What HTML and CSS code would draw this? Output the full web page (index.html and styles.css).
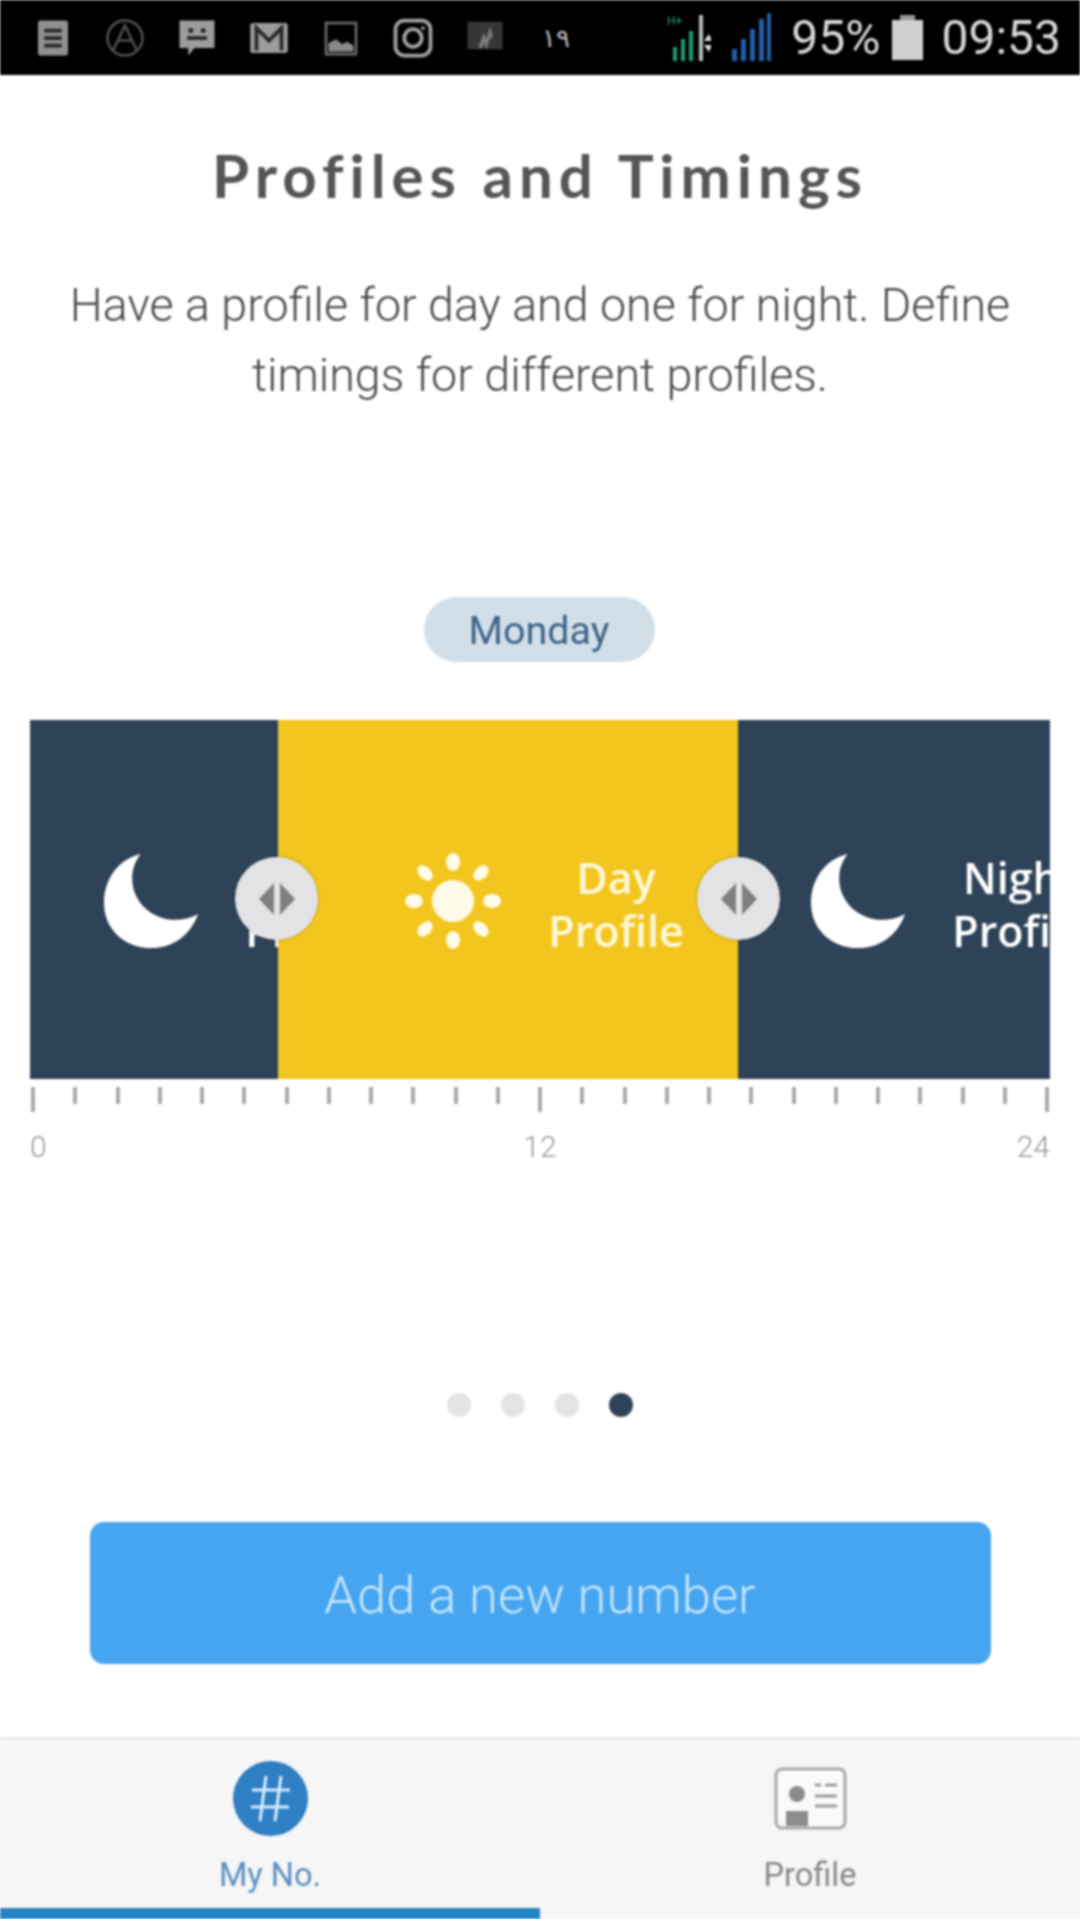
FILE: index.html
```html
<!DOCTYPE html>
<html lang="en">
<head>
  <meta charset="UTF-8">
  <meta name="viewport" content="width=device-width, initial-scale=1">
  <title>Profiles and Timings</title>
  <link rel="stylesheet" href="styles.css">
</head>
<body>
  <svg class="defs" width="0" height="0">
    <symbol id="moon" viewBox="0 0 100 100">
      <path d="M39 0C14 6 0 28 0 52C0 80 22 100 50 100C74 100 92 86 100 64C92 68 84 70 76 70C50 70 30 50 30 26C30 16 33 8 39 0Z" fill="#fff"/>
    </symbol>
  </svg>

  <div class="page">
    <div class="status-bar">
      <div class="status-icons">
        <svg class="status-icon" viewBox="0 0 32 32"><rect x="4" y="2" width="24" height="28" rx="2" fill="#b5b5b5"/><path d="M9 10h14M9 16h14M9 22h14" stroke="#333" stroke-width="3"/></svg>
        <svg class="status-icon" viewBox="0 0 32 32"><circle cx="16" cy="16" r="14" fill="none" stroke="#666" stroke-width="2"/><path d="M7 25L16 6l9 19M11 18h10" fill="none" stroke="#666" stroke-width="2"/></svg>
        <svg class="status-icon" viewBox="0 0 32 32"><path d="M2 2h28v22H14l-5 6v-6H2z" fill="#c4c4c4"/><circle cx="11" cy="10" r="2" fill="#333"/><circle cx="21" cy="10" r="2" fill="#333"/><path d="M8 16h16" stroke="#333" stroke-width="3"/></svg>
        <svg class="status-icon" viewBox="0 0 32 32"><rect x="1" y="4" width="30" height="24" rx="2" fill="#c4c4c4"/><path d="M6 26V8l10 10L26 8v18" fill="none" stroke="#333" stroke-width="3"/></svg>
        <svg class="status-icon" viewBox="0 0 32 32"><rect x="4" y="4" width="24" height="25" fill="none" stroke="#8a8a8a" stroke-width="2"/><path d="M6 27v-7l6-3 5 4 4-2 5 3v5z" fill="#aaa"/></svg>
        <svg class="status-icon" viewBox="0 0 32 32"><rect x="2" y="2" width="28" height="28" rx="7" fill="none" stroke="#c8c8c8" stroke-width="3"/><circle cx="16" cy="16" r="7" fill="none" stroke="#c8c8c8" stroke-width="3"/><circle cx="24" cy="8" r="1.5" fill="#c8c8c8"/></svg>
        <svg class="status-icon" viewBox="0 0 32 32"><rect x="2" y="3" width="28" height="22" fill="#444"/><path d="M12 24l3-8 2 5 3-9 1 4" fill="none" stroke="#999" stroke-width="3"/></svg>
        <span class="status-digits">١٩</span>
      </div>
      <div class="status-right">
        <svg class="signal" viewBox="0 0 44 54">
          <text x="0" y="14" class="signal-text">H+</text>
          <path d="M6 50h4V36H6zM14 50h4V28h-4zM22 50h4V20h-4z" fill="#1e9b6c"/>
          <path d="M32 50h4V4h-4z" fill="#bbb"/>
          <path d="M37 30l5-7 3 7zM37 34l5 7 3-7z" fill="#ddd"/>
        </svg>
        <svg class="signal signal-blue" viewBox="0 0 40 54">
          <path d="M1 50h5V38H1zM10 50h5V28h-5zM19 50h5V18h-5zM28 50h5V8h-5z" fill="#1f5fa8"/>
          <path d="M36 50h4V2h-4z" fill="#1f5fa8"/>
        </svg>
        <span class="status-text">95%</span>
        <span class="battery"></span>
        <span class="status-text">09:53</span>
      </div>
    </div>

    <div class="content">
      <h1 class="title">Profiles and Timings</h1>
      <p class="desc">Have a profile for day and one for night. Define<br>timings for different profiles.</p>

      <div class="day-pill">Monday</div>

      <div class="chart">
        <div class="segment seg-night-first">
          <svg class="moon"><use href="#moon"/></svg>
          <div class="seg-label">Night<br>Profile</div>
        </div>
        <div class="segment seg-day">
          <svg class="sun" viewBox="0 0 96 96">
            <circle cx="48" cy="48" r="21" fill="#fffbe8"/>
            <g fill="#fffbe8">
              <ellipse cx="48" cy="9" rx="7" ry="9"/>
              <ellipse cx="48" cy="87" rx="7" ry="9"/>
              <ellipse cx="9" cy="48" rx="9" ry="7"/>
              <ellipse cx="87" cy="48" rx="9" ry="7"/>
              <ellipse cx="20" cy="20" rx="6" ry="9" transform="rotate(-45 20 20)"/>
              <ellipse cx="76" cy="20" rx="6" ry="9" transform="rotate(45 76 20)"/>
              <ellipse cx="20" cy="76" rx="6" ry="9" transform="rotate(45 20 76)"/>
              <ellipse cx="76" cy="76" rx="6" ry="9" transform="rotate(-45 76 76)"/>
            </g>
          </svg>
          <div class="seg-label">Day<br>Profile</div>
        </div>
        <div class="segment seg-night">
          <svg class="moon"><use href="#moon"/></svg>
          <div class="seg-label">Night<br>Profile</div>
        </div>
        <div class="handle handle-left"><span class="arrow arrow-l"></span><span class="arrow arrow-r"></span></div>
        <div class="handle handle-right"><span class="arrow arrow-l"></span><span class="arrow arrow-r"></span></div>
      </div>

      <div class="ticks" id="ticks"></div>
      <div class="tick-labels">
        <span>0</span>
        <span>12</span>
        <span>24</span>
      </div>

      <div class="dots">
        <span class="dot"></span>
        <span class="dot"></span>
        <span class="dot"></span>
        <span class="dot active"></span>
      </div>

      <button class="add-btn">Add a new number</button>
    </div>

    <div class="tab-bar">
      <div class="tabs">
        <div class="tab tab-active">
          <svg class="tab-icon" viewBox="0 0 75 75">
            <circle cx="37.5" cy="37.5" r="37.5" fill="#2f7fc4"/>
            <path d="M33 15l-6 45M48 15l-6 45M19 29h38M18 46h38" fill="none" stroke="#d8eefc" stroke-width="3"/>
          </svg>
          <span>My No.</span>
        </div>
        <div class="tab">
          <svg class="tab-icon" viewBox="0 0 75 75">
            <rect x="3" y="8" width="69" height="59" rx="6" fill="#fafafa" stroke="#a8a8a8" stroke-width="3"/>
            <circle cx="24" cy="33" r="8" fill="#8c8c8c"/>
            <path d="M13 65V50h22v15z" fill="#8c8c8c"/>
            <path d="M42 24h6M52 24h12M42 35h22M42 45h22" stroke="#9a9a9a" stroke-width="3"/>
          </svg>
          <span>Profile</span>
        </div>
      </div>
      <div class="tab-progress"></div>
    </div>
  </div>

  <script>
    // 24 hour ruler, long tick at 0, 12 and 24
    const ticks = document.getElementById('ticks');
    for (let i = 0; i <= 24; i++) {
      const tick = document.createElement('span');
      tick.className = i % 12 === 0 ? 'tick major' : 'tick';
      ticks.appendChild(tick);
    }
  </script>
</body>
</html>
```

FILE: styles.css
```css
html, body {
  margin: 0;
  padding: 0;
  background: #fff;
}
.defs {
  position: absolute;
}
.page {
  width: 1080px;
  height: 1919px;
  display: flex;
  flex-direction: column;
  overflow: hidden;
  font-family: Roboto, sans-serif;
  filter: blur(1px);
}

/* status bar */
.status-bar {
  height: 75px;
  flex-shrink: 0;
  background: #000;
  display: flex;
  align-items: center;
  justify-content: space-between;
  padding: 0 19px 0 33px;
  box-sizing: border-box;
}
.status-icons {
  display: flex;
  align-items: center;
  gap: 32px;
}
.status-icon {
  width: 40px;
  height: 40px;
  opacity: 0.8;
}
.status-digits {
  font-family: "DejaVu Sans", sans-serif;
  font-size: 26px;
  color: #bbb;
  margin-left: 5px;
}
.status-right {
  display: flex;
  align-items: center;
}
.signal {
  width: 44px;
  height: 54px;
  margin-right: 20px;
}
.signal-blue {
  width: 40px;
  margin-right: 20px;
}
.signal-text {
  font-family: Roboto, sans-serif;
  font-size: 12px;
  fill: #1e9b6c;
}
.status-text {
  font-size: 48px;
  color: #d8d8d8;
}
.battery {
  width: 31px;
  height: 40px;
  margin: 4px 18px 0 12px;
  background: #d0d0d0;
  position: relative;
}
.battery::before {
  content: "";
  position: absolute;
  top: -5px;
  left: 8px;
  width: 15px;
  height: 5px;
  background: #999;
}

/* main content */
.content {
  display: flex;
  flex-direction: column;
  align-items: center;
}
.title {
  margin: 65px 0 0;
  font-family: Lato, sans-serif;
  font-size: 60px;
  font-weight: 700;
  line-height: 70px;
  letter-spacing: 6px;
  color: #555;
}
.desc {
  margin: 60px 0 0;
  font-size: 46.6px;
  font-weight: 300;
  line-height: 70px;
  text-align: center;
  color: #4a4a4a;
}
.day-pill {
  margin: 187px 2px 0 0;
  width: 231px;
  height: 65px;
  border-radius: 33px;
  background: #d3dfe8;
  color: #3e6488;
  font-size: 39.5px;
  line-height: 68px;
  text-align: center;
}

/* timeline */
.chart {
  position: relative;
  margin-top: 58px;
  width: 1020px;
  height: 359px;
  display: flex;
}
.segment {
  display: flex;
  align-items: center;
  overflow: hidden;
  box-sizing: border-box;
  height: 100%;
  flex-shrink: 0;
}
.seg-night-first {
  width: 248px;
  background: #2f4358;
  padding-left: 74px;
}
.seg-day {
  width: 460px;
  background: #f2c61f;
  padding-left: 127px;
}
.seg-night {
  width: 312px;
  background: #2f4358;
  padding-left: 73px;
}
.moon {
  width: 94px;
  height: 94px;
  flex-shrink: 0;
  margin: 3px 46px 0 0;
}
.sun {
  width: 96px;
  height: 96px;
  flex-shrink: 0;
  margin: 2px 46px 0 0;
}
.seg-label {
  flex-shrink: 0;
  width: 138px;
  padding-top: 8px;
  font-family: "Open Sans", sans-serif;
  font-size: 43px;
  font-weight: 600;
  line-height: 53px;
  text-align: center;
  color: #fff;
}
.seg-day .seg-label {
  color: #fff8d8;
}
.handle {
  position: absolute;
  top: 137px;
  width: 83px;
  height: 83px;
  border-radius: 50%;
  background: #e3e3e6;
  box-shadow: 0 0 3px rgba(0,0,0,0.3);
  display: flex;
  align-items: center;
  justify-content: center;
  gap: 6px;
}
.handle-left {
  left: 205px;
}
.handle-right {
  left: 667px;
}
.arrow {
  width: 0;
  height: 0;
  border-top: 16px solid transparent;
  border-bottom: 16px solid transparent;
}
.arrow-l {
  border-right: 15px solid #808080;
}
.arrow-r {
  border-left: 15px solid #808080;
}

.ticks {
  margin-top: 8px;
  width: 1020px;
  height: 25px;
  padding: 0 1px;
  box-sizing: border-box;
  display: flex;
  justify-content: space-between;
  align-items: flex-start;
}
.tick {
  width: 4px;
  height: 17px;
  background: #aaa;
}
.tick.major {
  height: 25px;
}
.tick-labels {
  margin-top: 20px;
  width: 1020px;
  display: flex;
  font-size: 30px;
  font-weight: 300;
  line-height: 30px;
  color: #999;
}
.tick-labels span {
  flex: 1;
  text-align: center;
}
.tick-labels span:first-child {
  text-align: left;
}
.tick-labels span:last-child {
  text-align: right;
}

.dots {
  margin-top: 231px;
  display: flex;
  gap: 30px;
}
.dot {
  width: 24px;
  height: 24px;
  border-radius: 50%;
  background: #e4e4e4;
}
.dot.active {
  background: #2f4358;
}

.add-btn {
  margin-top: 105px;
  width: 901px;
  height: 142px;
  padding-top: 4px;
  border: none;
  border-radius: 14px;
  background: #46a5f1;
  color: #c5e6fb;
  font-family: Roboto, sans-serif;
  font-size: 52.5px;
  font-weight: 300;
}

/* bottom tabs */
.tab-bar {
  margin-top: auto;
  height: 182px;
  flex-shrink: 0;
  display: flex;
  flex-direction: column;
  background: #f6f6f6;
  border-top: 2px solid #e8e8e8;
  box-sizing: border-box;
}
.tabs {
  flex: 1;
  display: flex;
}
.tab {
  flex: 1;
  display: flex;
  flex-direction: column;
  align-items: center;
  padding-top: 22px;
  font-size: 32.5px;
  color: #888;
}
.tab span {
  margin-top: 19px;
  line-height: 40px;
}
.tab-active {
  color: #5b8fc0;
}
.tab-icon {
  width: 75px;
  height: 75px;
}
.tab-progress {
  width: 540px;
  height: 11px;
  background: #2683c6;
}
```
